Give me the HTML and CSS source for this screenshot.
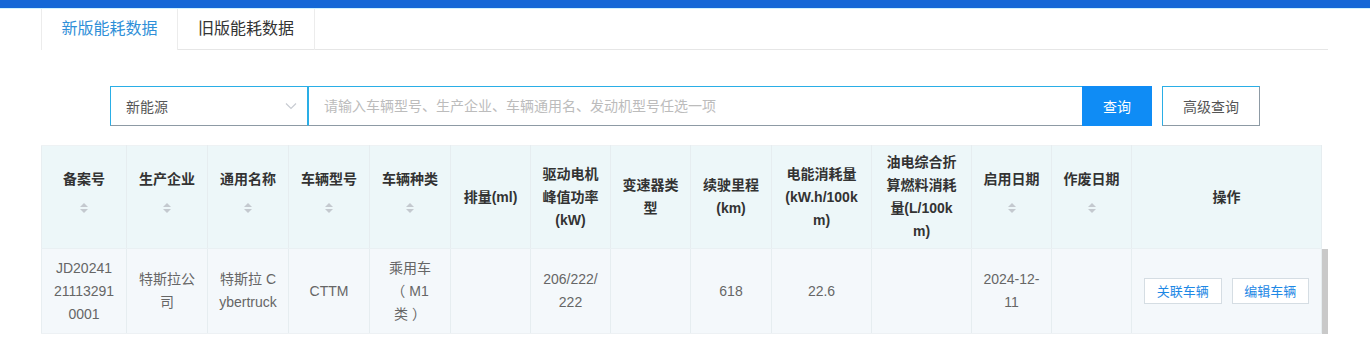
FILE: index.html
```html
<!DOCTYPE html>
<html lang="zh-CN">
<head>
  <meta charset="UTF-8">
  <title>能耗数据查询</title>
  <link rel="stylesheet" href="styles.css">
</head>
<body>
  <div class="topbar"></div>
  <div class="main">
    <div class="tabs">
      <div class="tab active">新版能耗数据</div>
      <div class="tab">旧版能耗数据</div>
    </div>

    <div class="search">
      <div class="select">
        <span>新能源</span>
        <svg class="arrow" width="12" height="8" viewBox="0 0 12 8"><path d="M1 1.5 L6 6.5 L11 1.5" fill="none" stroke="#c8ccd2" stroke-width="1.2"/></svg>
      </div>
      <input class="keyword" type="text" placeholder="请输入车辆型号、生产企业、车辆通用名、发动机型号任选一项">
      <button class="btn-query">查询</button>
      <button class="btn-adv">高级查询</button>
    </div>

    <div class="table-wrap">
      <table class="grid">
        <colgroup>
          <col style="width:85px"><col style="width:81px"><col style="width:81px"><col style="width:81px"><col style="width:81px">
          <col style="width:80px"><col style="width:80px"><col style="width:80px"><col style="width:81px">
          <col style="width:100px"><col style="width:100px"><col style="width:80px"><col style="width:80px"><col style="width:190px">
        </colgroup>
        <thead>
          <tr>
            <th>备案号<i class="sort"></i></th>
            <th>生产企业<i class="sort"></i></th>
            <th>通用名称<i class="sort"></i></th>
            <th>车辆型号<i class="sort"></i></th>
            <th>车辆种类<i class="sort"></i></th>
            <th>排量(ml)</th>
            <th>驱动电机峰值功率(kW)</th>
            <th>变速器类型</th>
            <th>续驶里程(km)</th>
            <th class="wide">电能消耗量(kW.h/100km)</th>
            <th class="wide">油电综合折算燃料消耗量(L/100k<br>m)</th>
            <th>启用日期<i class="sort"></i></th>
            <th>作废日期<i class="sort"></i></th>
            <th>操作</th>
          </tr>
        </thead>
        <tbody>
          <tr>
            <td class="code">JD20241211132910001</td>
            <td>特斯拉公司</td>
            <td class="brk">特斯拉 Cybertruck</td>
            <td>CTTM</td>
            <td>乘用车 （ M1 类&nbsp;）</td>
            <td></td>
            <td class="brk">206/222/222</td>
            <td></td>
            <td>618</td>
            <td>22.6</td>
            <td></td>
            <td>2024-12-11</td>
            <td></td>
            <td class="ops">
              <div class="op-group">
                <button class="op">关联车辆</button>
                <button class="op">编辑车辆</button>
              </div>
            </td>
          </tr>
        </tbody>
      </table>
      <div class="scrollbar"><div class="thumb"></div></div>
    </div>
  </div>
</body>
</html>
```

FILE: styles.css
```css
* {
  margin: 0;
  padding: 0;
  box-sizing: border-box;
}

body {
  background: #fff;
  font-family: "Liberation Sans", "Noto Sans CJK SC", sans-serif;
  font-size: 14px;
  color: #333;
  overflow: hidden;
}

.topbar {
  height: 9px;
  background: #1468d6;
  border-bottom: 1px solid #cdf3ff;
}

.main {
  width: 1287px;
  margin-left: 41px;
}

.tabs {
  display: flex;
  height: 41px;
  border-bottom: 1px solid #e6e6e6;
  margin-left: 137px;
}

.tab {
  width: 137px;
  height: 41px;
  line-height: 40px;
  text-align: center;
  font-size: 16px;
  color: #333;
  border-right: 1px solid #ececec;
}

.tab.active {
  margin-left: -137px;
  color: #2f8fd8;
  border-left: 1px solid #ececec;
  background: #fff;
}

.search {
  display: flex;
  margin: 36px 0 0 69px;
  height: 40px;
}

.select {
  width: 198px;
  display: flex;
  align-items: center;
  justify-content: space-between;
  padding: 0 10px 0 15px;
  border: 1px solid #2aaee6;
  border-bottom-color: #8d9aa4;
  color: #555;
}

.keyword {
  width: 774px;
  border: 1px solid #2aaee6;
  border-bottom-color: #8d9aa4;
  border-right: none;
  padding: 0 15px;
  font: inherit;
  color: #333;
  outline: none;
}

.keyword::placeholder {
  color: #bcbcbc;
}

.btn-query {
  width: 70px;
  border: none;
  background: #0f8cf5;
  color: #fff;
  font: inherit;
}

.btn-adv {
  width: 98px;
  margin-left: 10px;
  border: 1px solid #2aaee6;
  border-right-color: #8d9aa4;
  border-bottom-color: #8d9aa4;
  background: #fff;
  color: #555;
  font: inherit;
}

.table-wrap {
  display: flex;
  margin-top: 19px;
}

.grid {
  width: 1281px;
  table-layout: fixed;
  border-collapse: collapse;
  border-left: 1px solid #e8eef1;
}

.grid th,
.grid td {
  border-right: 1px solid #e6edf0;
  text-align: center;
  vertical-align: middle;
  line-height: 23px;
  padding: 0 11px;
}

.grid th {
  height: 103px;
  background: #edf7f9;
  border-top: 1px solid #eef2f4;
  border-bottom: 1px solid #e9f0f3;
  font-weight: bold;
  color: #333;
}

.grid th.wide {
  word-break: break-all;
}

.sort {
  display: block;
  width: 8px;
  height: 10px;
  margin: 12px auto 14px;
  position: relative;
}

.sort::before,
.sort::after {
  content: "";
  position: absolute;
  left: 0;
  border-left: 4px solid transparent;
  border-right: 4px solid transparent;
}

.sort::before {
  top: 0;
  border-bottom: 4px solid #c4c9cf;
}

.sort::after {
  bottom: 0;
  border-top: 4px solid #c4c9cf;
}

.grid td {
  height: 85px;
  background: #f4f8fb;
  border-bottom: 1px solid #edf1f4;
  color: #666;
}

.grid td.code,
.grid td.brk {
  word-break: break-all;
}

.grid td.ops {
  padding: 0 12px;
}

.op-group {
  display: flex;
  gap: 10px;
}

.op {
  width: 78px;
  height: 26px;
  border: 1px solid #d5dde3;
  background: #fff;
  color: #1e88e5;
  font: inherit;
  font-size: 13px;
}

.scrollbar {
  width: 7px;
  padding-top: 104px;
}

.thumb {
  height: 100%;
  background: #c9c9c9;
}
```
